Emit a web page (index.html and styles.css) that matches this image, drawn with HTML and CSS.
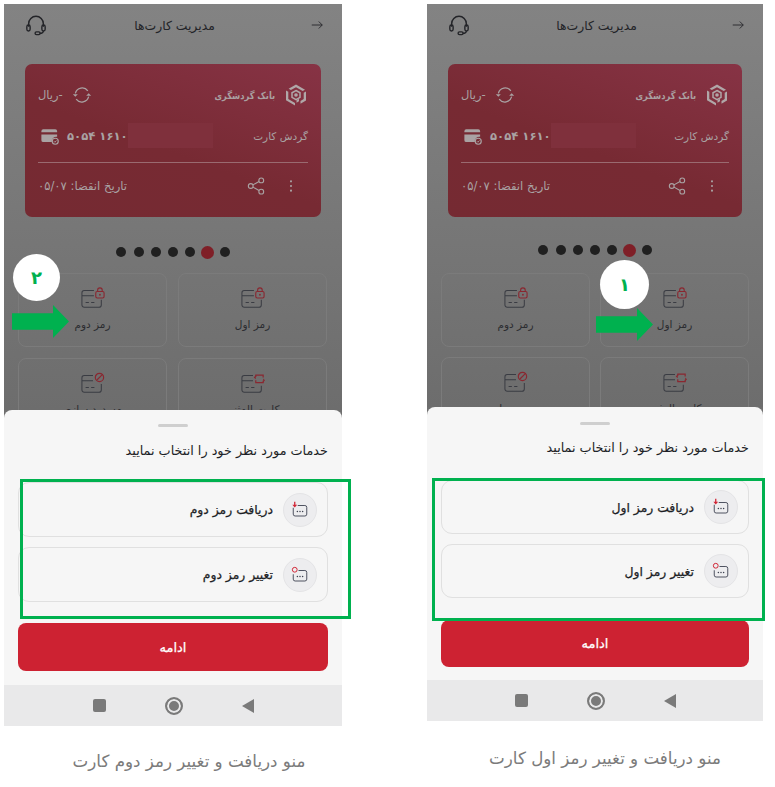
FILE: index.html
```html
<!DOCTYPE html>
<html lang="fa">
<head>
<meta charset="utf-8">
<title>منو دریافت و تغییر رمز کارت</title>
<link rel="stylesheet" href="styles.css">
</head>
<body>
<svg class="defs" aria-hidden="true">
  <symbol id="i-headset" viewBox="0 0 24 24"><path d="M4 14V10.500a8 8 0 0 1 16 0V14" fill="none" stroke="currentColor" stroke-width="1.600"/><rect x="2" y="12" width="3.600" height="6.500" rx="1.800" fill="none" stroke="currentColor" stroke-width="1.500"/><rect x="18.400" y="12" width="3.600" height="6.500" rx="1.800" fill="none" stroke="currentColor" stroke-width="1.500"/><path d="M20 18.500c0 1.800-1.500 2.600-4 2.600" fill="none" stroke="currentColor" stroke-width="1.500"/><rect x="11" y="19.500" width="5.500" height="3" rx="1.500" fill="none" stroke="currentColor" stroke-width="1.500"/></symbol>
  <symbol id="i-arrow" viewBox="0 0 24 24"><path d="M3 12H21M15 6l6 6-6 6" fill="none" stroke="currentColor" stroke-width="1.500"/></symbol>
  <symbol id="i-sync" viewBox="0 0 24 24"><path d="M4 10A8.500 8.500 0 0 1 19 7M20 14A8.500 8.500 0 0 1 5 17" fill="none" stroke="currentColor" stroke-width="1.500"/><path d="M1 11H7L4 14ZM17 13H23L20 10Z" fill="currentColor"/></symbol>
  <symbol id="i-paycard" viewBox="0 0 24 24"><path d="M3 3H19a2.500 2.500 0 0 1 2.500 2.500V7H.5V5.500A2.500 2.500 0 0 1 3 3ZM.5 10H21.500V13a6 6 0 0 0-7 7H3a2.500 2.500 0 0 1-2.500-2.500Z" fill="currentColor"/><circle cx="19" cy="19" r="4" fill="none" stroke="currentColor" stroke-width="1.600"/><path d="M17.300 19l1.300 1.300 2-2.300" fill="none" stroke="currentColor" stroke-width="1.200"/></symbol>
  <symbol id="i-share" viewBox="0 0 24 24"><circle cx="5" cy="12" r="3.200" fill="none" stroke="currentColor" stroke-width="1.500"/><circle cx="19" cy="4.500" r="3.200" fill="none" stroke="currentColor" stroke-width="1.500"/><circle cx="19" cy="19.500" r="3.200" fill="none" stroke="currentColor" stroke-width="1.500"/><path d="M8 10.500L16 6M8 13.500L16 18" stroke="currentColor" stroke-width="1.500"/></symbol>
  <symbol id="i-kebab" viewBox="0 0 24 24"><circle cx="12" cy="4" r="1.800" fill="currentColor"/><circle cx="12" cy="12" r="1.800" fill="currentColor"/><circle cx="12" cy="20" r="1.800" fill="currentColor"/></symbol>
  <symbol id="i-logo" viewBox="0 0 24 24"><path d="M12 1.500L21 6.700 18.700 8 12 4.200 6.900 7.100 4.600 5.800ZM22 8.500V17.500L16.500 20.700V18L19.700 16.100V9.800ZM2 7.500L4.300 8.800V16.100L11 20V22.500L2 17.300ZM12.500 19.800V17.200L15 15.800V18.300Z" fill="currentColor"/><path d="M12 7.500L16 9.800V14.400L12 16.700 8 14.400V9.800Z" fill="none" stroke="currentColor" stroke-width="1.500"/><circle cx="12" cy="12" r="1.800" fill="currentColor"/></symbol>
  <symbol id="i-lock" viewBox="0 0 26 24"><path d="M14 4H3.500A2.500 2.500 0 0 0 1 6.500V19.500A2.500 2.500 0 0 0 3.500 22H19.500A2.500 2.500 0 0 0 22 19.500V14M1 9.500H14M5 17H8.500M11 17H14.500" fill="none" stroke="#3a3c43" stroke-width="1.100"/><rect x="16" y="5" width="9" height="7" rx="1.500" fill="none" stroke="#8a2730" stroke-width="1.200"/><path d="M18 5V3.500a2.500 2.500 0 0 1 5 0V5" fill="none" stroke="#8a2730" stroke-width="1.200"/><circle cx="20.500" cy="8.500" r="1" fill="#8a2730"/></symbol>
  <symbol id="i-ban" viewBox="0 0 26 24"><path d="M13 4H3.500A2.500 2.500 0 0 0 1 6.500V19.500A2.500 2.500 0 0 0 3.500 22H19.500A2.500 2.500 0 0 0 22 19.500V13M1 9.500H13M5 17H8.500M11 17H14.500" fill="none" stroke="#3a3c43" stroke-width="1.100"/><circle cx="20" cy="6" r="4.500" fill="none" stroke="#8a2730" stroke-width="1.300"/><path d="M17 9L23 3" stroke="#8a2730" stroke-width="1.300"/></symbol>
  <symbol id="i-swap" viewBox="0 0 26 24"><path d="M13 4H3.500A2.500 2.500 0 0 0 1 6.500V19.500A2.500 2.500 0 0 0 3.500 22H19.500A2.500 2.500 0 0 0 22 19.500V15M1 9.500H13M5 17H8.500M11 17H14.500" fill="none" stroke="#3a3c43" stroke-width="1.100"/><path d="M16 5.500V3.500H24V6M24 9.500V11.500H16V9" fill="none" stroke="#8a2730" stroke-width="1.300"/><path d="M13.800 6L16 3.500V8ZM26 9L24 11.500V7Z" fill="#8a2730"/></symbol>
  <symbol id="i-get" viewBox="0 0 24 24"><path d="M9 6H18.500A2.500 2.500 0 0 1 21 8.500V17.500A2.500 2.500 0 0 1 18.500 20H5.500A2.500 2.500 0 0 1 3 17.500V9" fill="none" stroke="#3d4250" stroke-width="1.200"/><circle cx="8.500" cy="14" r="1" fill="#3d4250"/><circle cx="12" cy="14" r="1" fill="#3d4250"/><circle cx="15.500" cy="14" r="1" fill="#3d4250"/><path d="M5 1V6" stroke="#d12434" stroke-width="1.700"/><path d="M1.800 5H8.200L5 8.500Z" fill="#d12434"/></symbol>
  <symbol id="i-change" viewBox="0 0 24 24"><path d="M10 6H18.500A2.500 2.500 0 0 1 21 8.500V17.500A2.500 2.500 0 0 1 18.500 20H5.500A2.500 2.500 0 0 1 3 17.500V11" fill="none" stroke="#3d4250" stroke-width="1.200"/><circle cx="8.500" cy="14" r="1" fill="#3d4250"/><circle cx="12" cy="14" r="1" fill="#3d4250"/><circle cx="15.500" cy="14" r="1" fill="#3d4250"/><circle cx="5" cy="5" r="3.200" fill="none" stroke="#d12434" stroke-width="1.300"/></symbol>
</svg>

<main class="page">
  <figure class="shot shot-second">
    <div class="phone">
      <div class="backdrop">
        <header class="topbar">
          <svg class="topbar-icon"><use href="#i-headset"/></svg>
          <h1 class="topbar-title">مدیریت کارت‌ها</h1>
          <svg class="topbar-arrow"><use href="#i-arrow"/></svg>
        </header>
        <section class="card">
          <div class="card-row card-row-brand">
            <div class="brand"><svg class="brand-mark"><use href="#i-logo"/></svg><span class="brand-name">بانک گردشگری</span></div>
            <div class="balance"><svg class="card-icon"><use href="#i-sync"/></svg><span>-ریال</span></div>
          </div>
          <div class="card-row card-row-number">
            <span class="card-label">گردش کارت</span>
            <div class="redact"></div>
            <div class="number"><span class="digits">۵۰۵۴ ۱۶۱۰</span><svg class="pay-icon"><use href="#i-paycard"/></svg></div>
          </div>
          <div class="card-rule"></div>
          <div class="card-row card-row-foot">
            <div class="actions"><svg class="kebab"><use href="#i-kebab"/></svg><svg class="share"><use href="#i-share"/></svg></div>
            <span class="expiry">تاریخ انقضا: ۰۵/۰۷</span>
          </div>
        </section>
        <div class="dots"><i class="dot"></i><i class="dot active"></i><i class="dot"></i><i class="dot"></i><i class="dot"></i><i class="dot"></i><i class="dot"></i></div>
        <div class="tiles">
          <div class="tile"><svg class="tile-icon"><use href="#i-lock"/></svg><span>رمز اول</span></div>
          <div class="tile"><svg class="tile-icon"><use href="#i-lock"/></svg><span>رمز دوم</span></div>
          <div class="tile"><svg class="tile-icon"><use href="#i-swap"/></svg><span>کارت المثنی</span></div>
          <div class="tile"><svg class="tile-icon"><use href="#i-ban"/></svg><span>مسدود سازی</span></div>
        </div>
      </div>
      <section class="sheet">
        <div class="handle"></div>
        <h2 class="sheet-title">خدمات مورد نظر خود را انتخاب نمایید</h2>
        <div class="options">
          <div class="option"><span class="option-badge"><svg class="option-icon"><use href="#i-get"/></svg></span><span>دریافت رمز دوم</span></div>
          <div class="option"><span class="option-badge"><svg class="option-icon"><use href="#i-change"/></svg></span><span>تغییر رمز دوم</span></div>
        </div>
        <button class="continue" type="button">ادامه</button>
      </section>
      <nav class="navbar"><i class="nav-back"></i><i class="nav-home"></i><i class="nav-recent"></i></nav>
    </div>
    <figcaption class="caption">منو دریافت و تغییر رمز دوم کارت</figcaption>
    <div class="step">۲</div>
    <div class="pointer"></div>
    <div class="highlight"></div>
  </figure>

  <figure class="shot shot-first">
    <div class="phone">
      <div class="backdrop">
        <header class="topbar">
          <svg class="topbar-icon"><use href="#i-headset"/></svg>
          <h1 class="topbar-title">مدیریت کارت‌ها</h1>
          <svg class="topbar-arrow"><use href="#i-arrow"/></svg>
        </header>
        <section class="card">
          <div class="card-row card-row-brand">
            <div class="brand"><svg class="brand-mark"><use href="#i-logo"/></svg><span class="brand-name">بانک گردشگری</span></div>
            <div class="balance"><svg class="card-icon"><use href="#i-sync"/></svg><span>-ریال</span></div>
          </div>
          <div class="card-row card-row-number">
            <span class="card-label">گردش کارت</span>
            <div class="redact"></div>
            <div class="number"><span class="digits">۵۰۵۴ ۱۶۱۰</span><svg class="pay-icon"><use href="#i-paycard"/></svg></div>
          </div>
          <div class="card-rule"></div>
          <div class="card-row card-row-foot">
            <div class="actions"><svg class="kebab"><use href="#i-kebab"/></svg><svg class="share"><use href="#i-share"/></svg></div>
            <span class="expiry">تاریخ انقضا: ۰۵/۰۷</span>
          </div>
        </section>
        <div class="dots"><i class="dot"></i><i class="dot active"></i><i class="dot"></i><i class="dot"></i><i class="dot"></i><i class="dot"></i><i class="dot"></i></div>
        <div class="tiles">
          <div class="tile"><svg class="tile-icon"><use href="#i-lock"/></svg><span>رمز اول</span></div>
          <div class="tile"><svg class="tile-icon"><use href="#i-lock"/></svg><span>رمز دوم</span></div>
          <div class="tile"><svg class="tile-icon"><use href="#i-swap"/></svg><span>کارت المثنی</span></div>
          <div class="tile"><svg class="tile-icon"><use href="#i-ban"/></svg><span>مسدود سازی</span></div>
        </div>
      </div>
      <section class="sheet">
        <div class="handle"></div>
        <h2 class="sheet-title">خدمات مورد نظر خود را انتخاب نمایید</h2>
        <div class="options">
          <div class="option"><span class="option-badge"><svg class="option-icon"><use href="#i-get"/></svg></span><span>دریافت رمز اول</span></div>
          <div class="option"><span class="option-badge"><svg class="option-icon"><use href="#i-change"/></svg></span><span>تغییر رمز اول</span></div>
        </div>
        <button class="continue" type="button">ادامه</button>
      </section>
      <nav class="navbar"><i class="nav-back"></i><i class="nav-home"></i><i class="nav-recent"></i></nav>
    </div>
    <figcaption class="caption">منو دریافت و تغییر رمز اول کارت</figcaption>
    <div class="step">۱</div>
    <div class="pointer"></div>
    <div class="highlight"></div>
  </figure>
</main>
</body>
</html>
```
FILE: styles.css
```css
* { box-sizing: border-box; }
html, body { margin: 0; height: 787px; overflow: hidden; background: #fff; }
body { font-family: "DejaVu Sans", sans-serif; }
.defs { display: none; }

.page { display: flex; gap: 85px; padding: 4px 0 0 4px; }

.shot { position: relative; margin: 0; }
.shot-second {
  width: 338px;
  --backdrop: 406px; --dots-top: 28px; --tiles-top: 14px; --tiles-left: 14px; --tile-gap: 11px;
  --handle-top: 14px; --title-top: 14px; --options-top: 21px; --option-h: 55px;
  --btn-top: 21px; --btn-h: 48px; --sheet-bottom: 14px; --cap-top: 23px; --cap-shift: 32px;
}
.shot-first {
  width: 336px;
  --backdrop: 403px; --dots-top: 26px; --tiles-top: 16px; --tiles-left: 14px; --tile-gap: 10px;
  --handle-top: 15px; --title-top: 13px; --options-top: 22px; --option-h: 54px;
  --btn-top: 22px; --btn-h: 47px; --sheet-bottom: 13px; --cap-top: 25px; --cap-shift: 20px;
}

.phone { display: flex; flex-direction: column; background: #6f6f6f; }

/* dimmed screen */
.backdrop {
  height: var(--backdrop);
  overflow: hidden;
  background: linear-gradient(#838383, #6d6d6d);
}
.topbar {
  display: grid; grid-template-columns: 1fr auto 1fr; align-items: center;
  height: 42px; padding: 0 18px 0 21px; color: #232428;
}
.topbar-icon { width: 22px; height: 22px; }
.topbar-arrow { width: 14px; height: 14px; justify-self: end; }
.topbar-title { margin: 0; font-size: 12.400px; font-weight: 400; direction: rtl; }

.card {
  display: flex; flex-direction: column;
  height: 153px; margin: 18px 21px 0; padding: 14px 13px 0;
  border-radius: 7px; color: #a9a2a3;
  background: linear-gradient(200deg, #873345, #772a33 55%, #752a32);
}
.card-row { display: flex; align-items: center; justify-content: space-between; direction: rtl; position: relative; }
.card-row-brand { height: 34px; }
.card-row-number { height: 32px; margin-top: 8px; }
.card-row-foot { height: 32px; margin-top: 7px; }
.brand { display: flex; align-items: center; gap: 9px; }
.brand-mark { width: 24px; height: 24px; color: #b0a7a8; }
.brand-name { font-size: 10px; font-weight: 700; color: #aaa0a1; transform: scaleX(.83); transform-origin: right center; }
.balance { display: flex; align-items: center; gap: 9px; font-size: 11.500px; direction: rtl; }
.card-icon { width: 20px; height: 20px; }
.card-label { font-size: 10.500px; }
.redact {
  position: absolute; left: 90px; top: 3px; width: 85px; height: 25px;
  background: #7f303c;
}
.number { display: flex; align-items: center; gap: 8px; flex-direction: row-reverse; direction: ltr; padding-left: 3px; }
.digits { font-size: 11.600px; font-weight: 700; direction: ltr; unicode-bidi: isolate; }
.pay-icon { width: 18px; height: 18px; }
.card-rule { flex: none; height: 1px; margin-top: 10px; background: #9a6a70; }
.actions { display: flex; align-items: center; gap: 19px; margin-right: 10px; }
.kebab { width: 14px; height: 18px; }
.share { width: 18px; height: 18px; }
.expiry { font-size: 11.600px; }

.dots {
  display: flex; flex-direction: row-reverse; align-items: center; justify-content: center;
  gap: 7.200px; height: 14px; margin-top: var(--dots-top);
}
.dot { width: 10px; height: 10px; border-radius: 50%; background: #202020; }
.dot.active { width: 13px; height: 13px; margin: 0 -1.500px; background: #7f1f27; }

.tiles {
  display: grid; grid-template-columns: 149px 149px; grid-auto-rows: 74px;
  justify-content: start; gap: var(--tile-gap);
  margin: var(--tiles-top) 0 0 var(--tiles-left); direction: rtl;
  width: max-content;
}
.tile {
  display: flex; flex-direction: column; align-items: center; gap: 8px;
  padding-top: 12px;
  border: 1px solid #7b7b7b; border-radius: 8px;
  font-size: 10.500px; color: #2b2c30;
}
.tile-icon { flex: none; width: 24px; height: 24px; }

/* bottom sheet */
.sheet {
  display: flex; flex-direction: column;
  padding: var(--handle-top) 14px var(--sheet-bottom);
  background: #f6f6f6;
  border-radius: 8px 8px 0 0;
  direction: rtl;
}
.handle { align-self: center; width: 30px; height: 3px; border-radius: 2px; background: #cfcfcf; }
.sheet-title {
  margin: var(--title-top) 0 0; height: 20px; line-height: 20px;
  font-size: 12.800px; font-weight: 400; color: #1d1f26;
}
.options { display: flex; flex-direction: column; gap: 10px; margin-top: var(--options-top); }
.option {
  display: flex; align-items: center; gap: 10px;
  height: var(--option-h); padding: 0 10px 0 0;
  border: 1px solid #e0e0e0; border-radius: 11px;
  font-size: 12.400px; color: #1d1f26; -webkit-text-stroke: .25px #1d1f26;
}
.option-badge {
  display: flex; align-items: center; justify-content: center;
  width: 34px; height: 34px; border-radius: 50%;
  background: #ededef; border: 1px solid #e4e4e6;
}
.option-icon { width: 18px; height: 18px; }
.continue {
  height: var(--btn-h); margin-top: var(--btn-top);
  border: 0; border-radius: 8px; background: #cd2232; color: #fff;
  font-family: inherit; font-size: 13px; -webkit-text-stroke: .25px #fff;
}

/* system navigation */
.navbar {
  display: flex; flex-direction: row; align-items: center; justify-content: center; gap: 59px;
  height: 41px; background: #e9e9ea;
}
.nav-back { width: 13px; height: 13px; border-radius: 2px; background: #7a7a7a; }
.nav-home {
  width: 18px; height: 18px; border-radius: 50%;
  border: 2px solid #7a7a7a; background: #7a7a7a; box-shadow: inset 0 0 0 2px #e9e9ea;
}
.nav-recent {
  width: 0; height: 0;
  border-style: solid; border-width: 7px 12px 7px 0;
  border-color: transparent #7a7a7a transparent transparent;
}

.caption {
  margin-top: var(--cap-top); padding-left: var(--cap-shift);
  direction: rtl; text-align: center;
  font-size: 16.700px; line-height: 24px; color: #7b7b7b;
}

/* annotations laid over the screenshot */
.step {
  position: absolute;
  display: flex; align-items: center; justify-content: center;
  border-radius: 50%; background: #fff; color: #00b14f;
  font-size: 18px; font-weight: 700;
}
.pointer {
  position: absolute; width: 57px; height: 33px; background: #00b14f;
  clip-path: polygon(0 25%, 72% 25%, 72% 0, 100% 50%, 72% 100%, 72% 75%, 0 75%);
}
.highlight { position: absolute; border: 3px solid #00b14f; }

.shot-second .step { left: 9px; top: 250px; width: 47px; height: 47px; }
.shot-second .pointer { left: 8px; top: 301px; }
.shot-second .highlight { left: 16px; top: 475px; width: 331px; height: 140px; }
.shot-first .step { left: 173px; top: 256px; width: 49px; height: 49px; }
.shot-first .pointer { left: 169px; top: 304px; }
.shot-first .highlight { left: 5px; top: 474px; width: 333px; height: 143px; }
```
